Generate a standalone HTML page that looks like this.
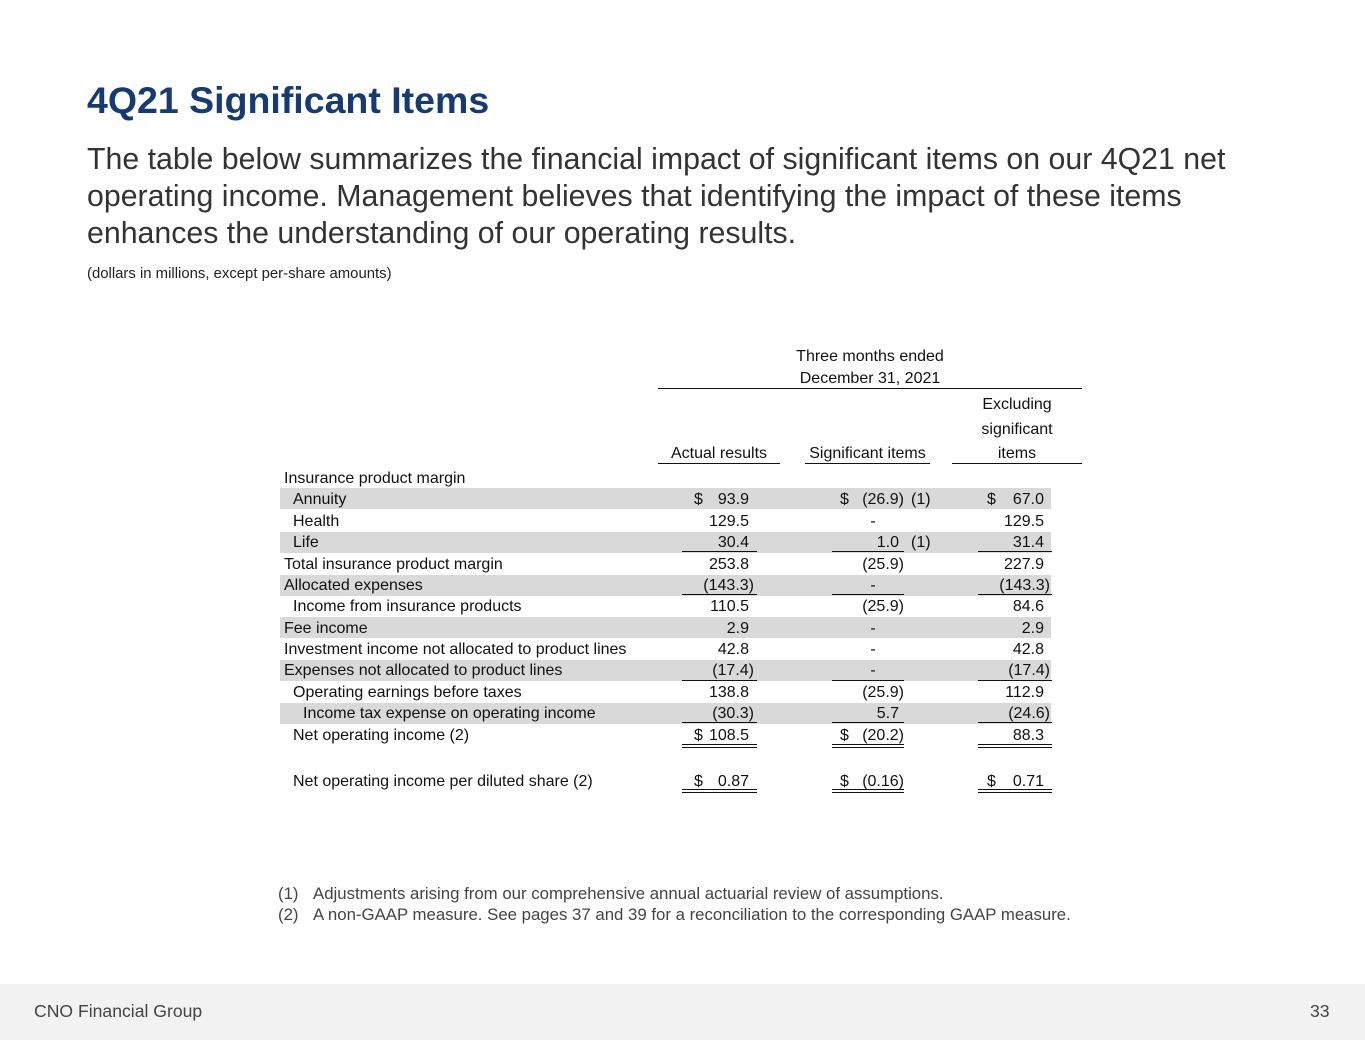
<!DOCTYPE html>
<html><head><meta charset="utf-8"><style>
body{margin:0;width:1365px;height:1055px;background:#fff;position:relative;overflow:hidden;font-family:"Liberation Sans",Arial,sans-serif;color:#222}
.a{position:absolute;white-space:nowrap}
h1{position:absolute;left:87px;top:79px;margin:0;font-size:37.5px;font-weight:bold;color:#163a75}
.intro{position:absolute;left:87px;top:141px;font-size:30.3px;line-height:37px;color:#333;width:1180px}
.t{font-size:16px;color:#111;line-height:18px}
.r{text-align:right}
.c{text-align:center}
.band{position:absolute;left:280px;width:771px;height:21px;background:#d9d9d9}
.ul{position:absolute;height:1px;background:#111}
.foot{position:absolute;left:0;top:984px;width:1365px;height:56px;background:#f2f2f2}
.tb{position:absolute;left:0;top:1px;width:1365px;height:900px}
.fn{position:absolute;font-size:16.8px;color:#444;white-space:nowrap}
</style></head><body>
<h1>4Q21 Significant Items</h1>
<div class="intro">The table below summarizes the financial impact of significant items on our 4Q21 net operating income. Management believes that identifying the impact of these items enhances the understanding of our operating results.</div>
<div class="a" style="left:87px;top:266px;font-size:14.9px;color:#222">(dollars in millions, except per-share amounts)</div>

<div class="band" style="top:488px"></div>
<div class="band" style="top:532px"></div>
<div class="band" style="top:575px"></div>
<div class="band" style="top:617px"></div>
<div class="band" style="top:660px"></div>
<div class="band" style="top:703px"></div>

<div class="tb">
<div class="a t c" style="left:760px;width:220px;top:347px">Three months ended</div>
<div class="a t c" style="left:760px;width:220px;top:369px">December 31, 2021</div>
<div class="a t c" style="left:952px;width:130px;top:395px">Excluding</div>
<div class="a t c" style="left:952px;width:130px;top:420px">significant</div>
<div class="a t c" style="left:952px;width:130px;top:444px">items</div>
<div class="a t c" style="left:658px;width:122px;top:444px">Actual results</div>
<div class="a t c" style="left:805px;width:125px;top:444px">Significant items</div>

<div class="a t" style="left:284px;top:469px">Insurance product margin</div>
<div class="a t" style="left:293px;top:490px">Annuity</div>
<div class="a t" style="left:293px;top:512px">Health</div>
<div class="a t" style="left:293px;top:533px">Life</div>
<div class="a t" style="left:284px;top:555px">Total insurance product margin</div>
<div class="a t" style="left:284px;top:576px">Allocated expenses</div>
<div class="a t" style="left:293px;top:597px">Income from insurance products</div>
<div class="a t" style="left:284px;top:619px">Fee income</div>
<div class="a t" style="left:284px;top:640px">Investment income not allocated to product lines</div>
<div class="a t" style="left:284px;top:661px">Expenses not allocated to product lines</div>
<div class="a t" style="left:293px;top:683px">Operating earnings before taxes</div>
<div class="a t" style="left:303px;top:704px">Income tax expense on operating income</div>
<div class="a t" style="left:293px;top:726px">Net operating income (2)</div>
<div class="a t" style="left:293px;top:772px">Net operating income per diluted share (2)</div>

<div class="a t" style="left:694px;top:490px">$</div>
<div class="a t" style="left:694px;top:726px">$</div>
<div class="a t" style="left:694px;top:772px">$</div>
<div class="a t r" style="left:650px;width:99px;top:490px">93.9</div>
<div class="a t r" style="left:650px;width:99px;top:512px">129.5</div>
<div class="a t r" style="left:650px;width:99px;top:533px">30.4</div>
<div class="a t r" style="left:650px;width:99px;top:555px">253.8</div>
<div class="a t r" style="left:650px;width:104px;top:576px">(143.3)</div>
<div class="a t r" style="left:650px;width:99px;top:597px">110.5</div>
<div class="a t r" style="left:650px;width:99px;top:619px">2.9</div>
<div class="a t r" style="left:650px;width:99px;top:640px">42.8</div>
<div class="a t r" style="left:650px;width:104px;top:661px">(17.4)</div>
<div class="a t r" style="left:650px;width:99px;top:683px">138.8</div>
<div class="a t r" style="left:650px;width:104px;top:704px">(30.3)</div>
<div class="a t r" style="left:650px;width:99px;top:726px">108.5</div>
<div class="a t r" style="left:650px;width:99px;top:772px">0.87</div>

<div class="a t" style="left:840px;top:490px">$</div>
<div class="a t" style="left:840px;top:726px">$</div>
<div class="a t" style="left:840px;top:772px">$</div>
<div class="a t r" style="left:800px;width:104px;top:490px">(26.9)</div>
<div class="a t" style="left:911px;top:490px">(1)</div>
<div class="a t c" style="left:863px;width:20px;top:512px">-</div>
<div class="a t r" style="left:800px;width:99px;top:533px">1.0</div>
<div class="a t" style="left:911px;top:533px">(1)</div>
<div class="a t r" style="left:800px;width:104px;top:555px">(25.9)</div>
<div class="a t c" style="left:863px;width:20px;top:576px">-</div>
<div class="a t r" style="left:800px;width:104px;top:597px">(25.9)</div>
<div class="a t c" style="left:863px;width:20px;top:619px">-</div>
<div class="a t c" style="left:863px;width:20px;top:640px">-</div>
<div class="a t c" style="left:863px;width:20px;top:661px">-</div>
<div class="a t r" style="left:800px;width:104px;top:683px">(25.9)</div>
<div class="a t r" style="left:800px;width:99px;top:704px">5.7</div>
<div class="a t r" style="left:800px;width:104px;top:726px">(20.2)</div>
<div class="a t r" style="left:800px;width:104px;top:772px">(0.16)</div>

<div class="a t" style="left:987px;top:490px">$</div>
<div class="a t" style="left:987px;top:772px">$</div>
<div class="a t r" style="left:950px;width:94px;top:490px">67.0</div>
<div class="a t r" style="left:950px;width:94px;top:512px">129.5</div>
<div class="a t r" style="left:950px;width:94px;top:533px">31.4</div>
<div class="a t r" style="left:950px;width:94px;top:555px">227.9</div>
<div class="a t r" style="left:950px;width:100px;top:576px">(143.3)</div>
<div class="a t r" style="left:950px;width:94px;top:597px">84.6</div>
<div class="a t r" style="left:950px;width:94px;top:619px">2.9</div>
<div class="a t r" style="left:950px;width:94px;top:640px">42.8</div>
<div class="a t r" style="left:950px;width:100px;top:661px">(17.4)</div>
<div class="a t r" style="left:950px;width:94px;top:683px">112.9</div>
<div class="a t r" style="left:950px;width:100px;top:704px">(24.6)</div>
<div class="a t r" style="left:950px;width:94px;top:726px">88.3</div>
<div class="a t r" style="left:950px;width:94px;top:772px">0.71</div>
</div>

<div class="ul" style="left:658px;width:424px;top:388px"></div>
<div class="ul" style="left:658px;width:122px;top:463px"></div>
<div class="ul" style="left:805px;width:125px;top:463px"></div>
<div class="ul" style="left:952px;width:130px;top:463px"></div>
<div class="ul" style="left:682px;width:75px;top:551px"></div>
<div class="ul" style="left:832px;width:72px;top:551px"></div>
<div class="ul" style="left:978px;width:74px;top:551px"></div>
<div class="ul" style="left:682px;width:75px;top:594px"></div>
<div class="ul" style="left:832px;width:72px;top:594px"></div>
<div class="ul" style="left:978px;width:74px;top:594px"></div>
<div class="ul" style="left:682px;width:75px;top:680px"></div>
<div class="ul" style="left:832px;width:72px;top:680px"></div>
<div class="ul" style="left:978px;width:74px;top:680px"></div>
<div class="ul" style="left:682px;width:75px;top:722px"></div>
<div class="ul" style="left:832px;width:72px;top:722px"></div>
<div class="ul" style="left:978px;width:74px;top:722px"></div>
<div class="ul" style="left:682px;width:75px;top:744px"></div><div class="ul" style="left:682px;width:75px;top:747px"></div>
<div class="ul" style="left:832px;width:72px;top:744px"></div><div class="ul" style="left:832px;width:72px;top:747px"></div>
<div class="ul" style="left:978px;width:74px;top:744px"></div><div class="ul" style="left:978px;width:74px;top:747px"></div>
<div class="ul" style="left:682px;width:75px;top:789px"></div><div class="ul" style="left:682px;width:75px;top:792px"></div>
<div class="ul" style="left:832px;width:72px;top:789px"></div><div class="ul" style="left:832px;width:72px;top:792px"></div>
<div class="ul" style="left:978px;width:74px;top:789px"></div><div class="ul" style="left:978px;width:74px;top:792px"></div>

<div class="fn" style="left:278px;top:884px">(1)</div>
<div class="fn" style="left:313px;top:884px">Adjustments arising from our comprehensive annual actuarial review of assumptions.</div>
<div class="fn" style="left:278px;top:905px">(2)</div>
<div class="fn" style="left:313px;top:905px">A non-GAAP measure. See pages 37 and 39 for a reconciliation to the corresponding GAAP measure.</div>

<div class="foot"></div>
<div class="a" style="left:34px;top:1001px;font-size:17.6px;color:#444">CNO Financial Group</div>
<div class="a" style="left:1310px;top:1001px;font-size:17.6px;color:#444">33</div>
</body></html>
